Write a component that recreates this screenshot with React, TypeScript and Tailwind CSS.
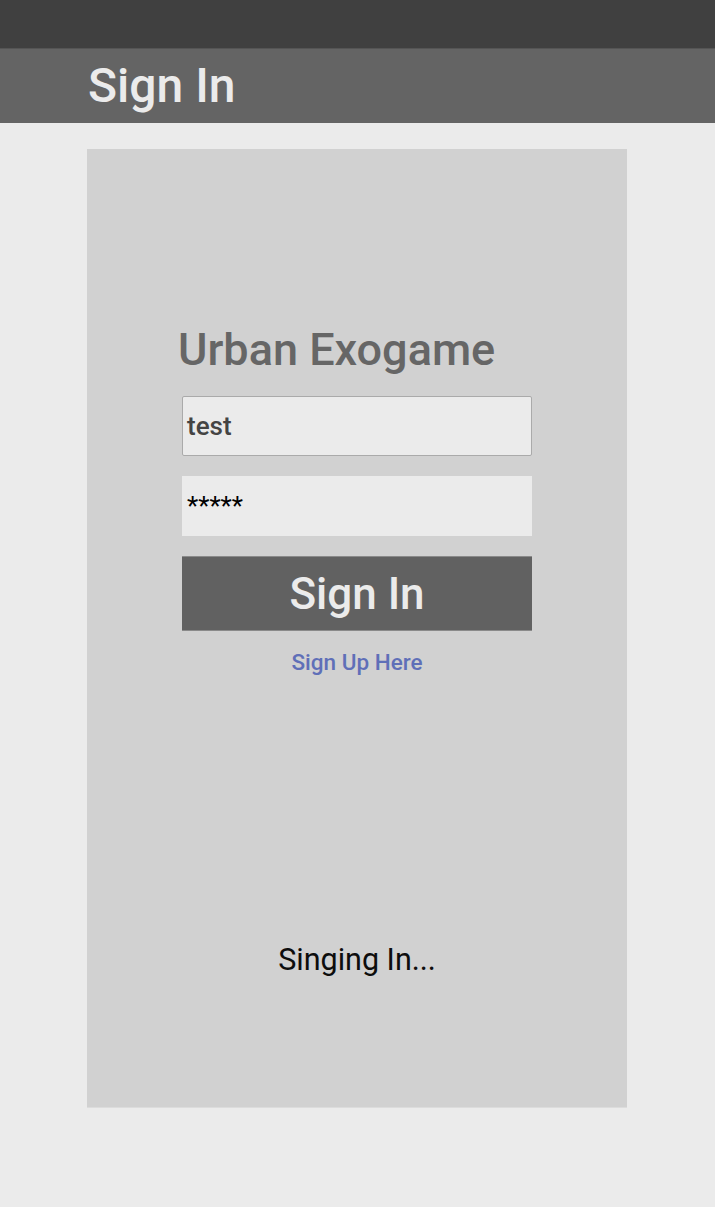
import React from 'react'

export default function App() {
  return (
    <div
      className="flex h-[1207px] w-[715px] flex-col bg-[#ebebeb]"
      style={{ fontFamily: 'Roboto, "Noto Sans", sans-serif' }}
    >
      {/* status bar */}
      <div className="h-[48px] bg-[#404040]" />

      {/* title bar */}
      <div className="flex h-[75px] items-center border-t border-[#555] bg-[#646464] pl-[88px]">
        <h1 className="text-[48px] font-medium leading-none text-[#ebebeb]">Sign In</h1>
      </div>

      <div className="flex pl-[87px] pt-[26px]">
        <div className="flex h-[959px] w-[540px] flex-col items-center border-b border-[#dcdcdc] bg-[#d1d1d1] pt-[174px]">
          <div className="w-[350px]">
            <h2 className="-ml-[4px] text-[45px] font-medium leading-[54px] text-[#666666]">Urban Exogame</h2>
          </div>

          <div className="mt-[19px] flex h-[60px] w-[350px] items-center rounded-[2px] border border-[#aaaaaa] bg-[#ebebeb] pl-[4px]">
            <span className="text-[26px] font-medium text-[#444444]">test</span>
          </div>

          <div className="mt-[20px] flex h-[60px] w-[350px] items-center bg-[#ebebeb] pl-[5px]">
            <span className="text-[26px] text-black">*****</span>
          </div>

          <button className="mt-[20px] flex h-[75px] w-[350px] items-center justify-center border-y border-[#8a8a8a] bg-[#616161]">
            <span className="text-[44px] font-medium leading-none text-[#ebebeb]">Sign In</span>
          </button>

          <a className="mt-[15px] text-[22.5px] font-medium text-[#5f6fb8]">Sign Up Here</a>

          <p className="mt-[257px] text-[30.5px] text-[#0d0d0d]">Singing In...</p>
        </div>
      </div>
    </div>
  )
}
